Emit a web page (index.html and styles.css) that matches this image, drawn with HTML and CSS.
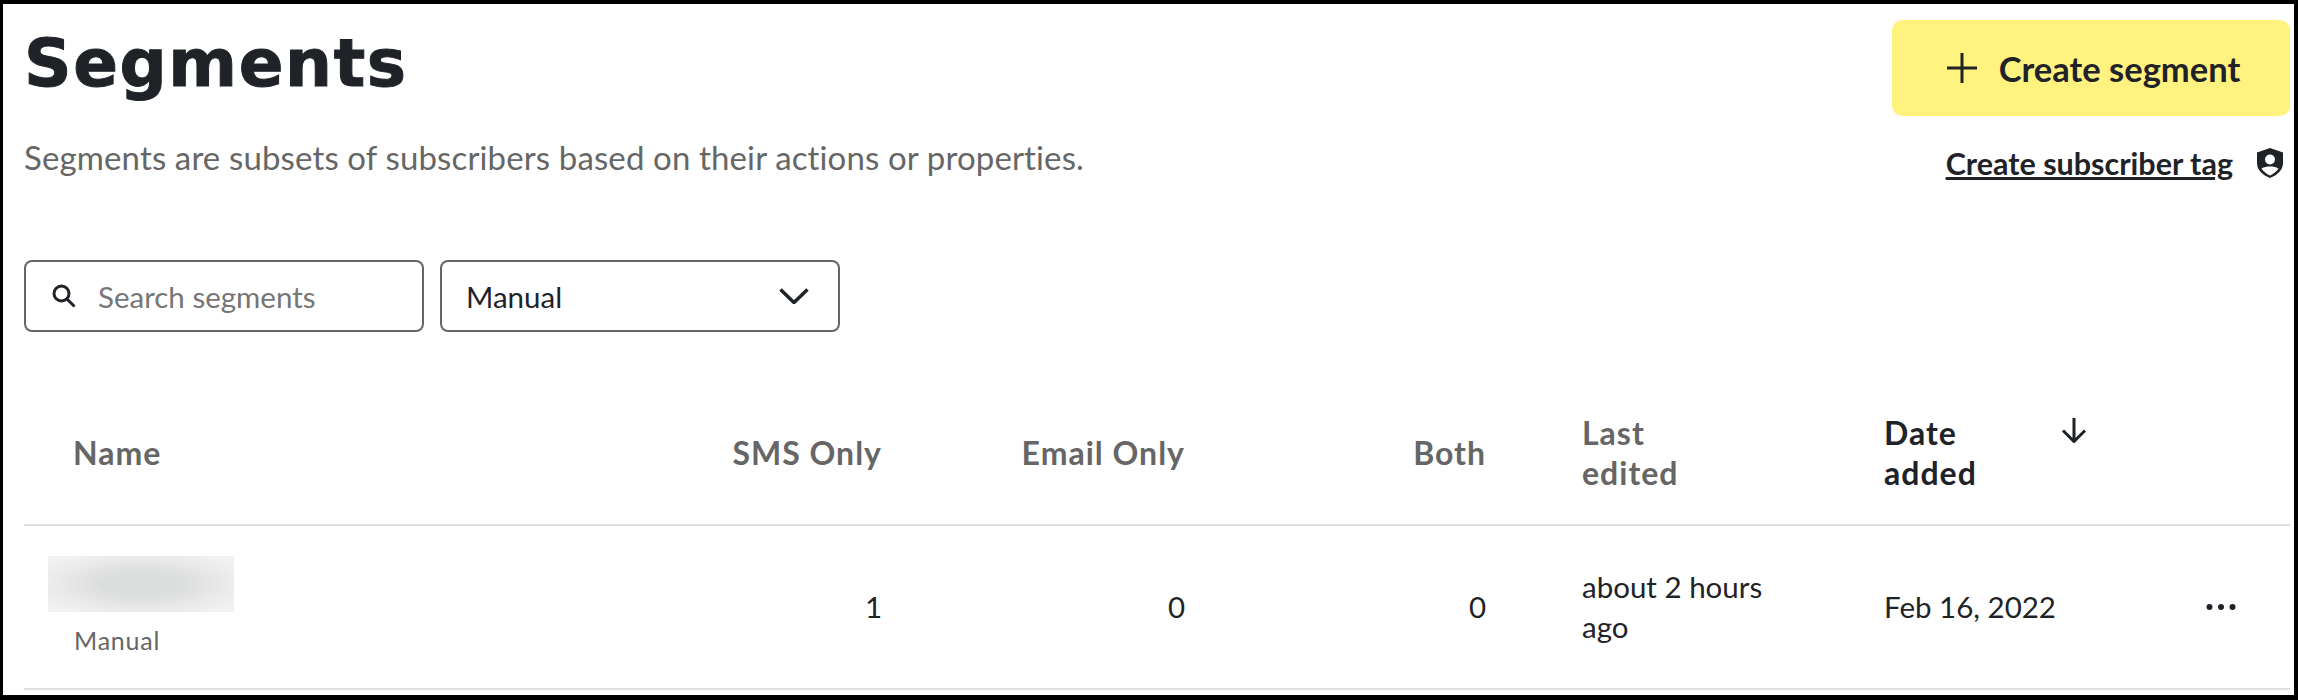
FILE: index.html
```html
<!DOCTYPE html>
<html>
<head>
  <title>Segments</title>
  <link rel="stylesheet" href="styles.css">
</head>
<body>
  <div class="page">
    <div class="page-header">
      <div class="page-heading">
        <h1 class="page-title">Segments</h1>
        <p class="page-subtitle">Segments are subsets of subscribers based on their actions or properties.</p>
      </div>
      <div class="page-actions">
        <button class="create-button">
          <svg class="plus-icon" viewBox="0 0 30 30"><path d="M15 0v30M0 15h30"/></svg>
          Create segment
        </button>
        <div class="tag-row">
          <a class="tag-link" href="#">Create subscriber tag</a>
          <svg class="shield-icon" viewBox="0 0 26 30">
            <path fill-rule="evenodd" d="M13 0l13 4.500v10.500c0 7-5.500 12-13 15C5.500 27 0 22 0 15V4.500zM13 6.500a5 5 0 1 0 0 10a5 5 0 0 0 0-10zM4.500 20.500c2 3 5 5.500 8.500 7c3.500-1.500 6.500-4 8.500-7c-2.500-1.500-5.500-2-8.500-2s-6 .5-8.500 2z"/>
          </svg>
        </div>
      </div>
    </div>

    <div class="filters">
      <div class="filter-box">
        <svg class="search-icon" viewBox="0 0 24 24"><circle cx="9.500" cy="9.500" r="7.500"/><path d="M15 15l7.500 7.500"/></svg>
        <span class="search-placeholder">Search segments</span>
      </div>
      <div class="filter-box filter-select">
        <span>Manual</span>
        <svg class="chevron-icon" viewBox="0 0 30 16"><path d="M1.500 1.500L15 14.500L28.500 1.500"/></svg>
      </div>
    </div>

    <table class="segments-table">
      <colgroup>
        <col class="col-name">
        <col class="col-sms">
        <col class="col-email">
        <col class="col-both">
        <col class="col-edited">
        <col class="col-added">
        <col class="col-menu">
      </colgroup>
      <thead>
        <tr>
          <th class="name-head">Name</th>
          <th class="num">SMS Only</th>
          <th class="num">Email Only</th>
          <th class="num">Both</th>
          <th class="edited">Last<br>edited</th>
          <th class="sorted">
            <div class="sort-head">
              <span>Date<br>added</span>
              <svg class="arrow-icon" viewBox="0 0 28 26"><path d="M14 1v23M3 13.500L14 24.500L25 13.500"/></svg>
            </div>
          </th>
          <th></th>
        </tr>
      </thead>
      <tbody>
        <tr>
          <td class="name-cell">
            <div class="blurred-name"></div>
            <div class="segment-type">Manual</div>
          </td>
          <td class="num">1</td>
          <td class="num">0</td>
          <td class="num">0</td>
          <td class="edited">about 2 hours<br>ago</td>
          <td>Feb 16, 2022</td>
          <td class="menu-cell">
            <svg class="dots-icon" viewBox="0 0 30 6"><circle cx="3.500" cy="3" r="3"/><circle cx="15" cy="3" r="3"/><circle cx="26.500" cy="3" r="3"/></svg>
          </td>
        </tr>
      </tbody>
    </table>
  </div>
</body>
</html>
```
FILE: styles.css
```css
html, body {
  margin: 0;
  padding: 0;
  height: 700px;
  background-color: #000;
  overflow: hidden;
}

body {
  font-family: Lato, "Open Sans", sans-serif;
  color: #1f2328;
}

.page {
  margin: 4px 4px 0 3px;
  height: 691px;
  padding: 0 4px 0 21px;
  background-color: #fff;
  overflow: hidden;
}

.page-header {
  display: flex;
  justify-content: space-between;
  align-items: flex-start;
  height: 256px;
}

.page-title {
  margin: 20px 0 0;
  font-family: "DejaVu Sans", sans-serif;
  font-size: 66px;
  line-height: 80px;
  font-weight: 700;
  letter-spacing: 1.600px;
  -webkit-text-stroke: 1px #1f2328;
}

.page-subtitle {
  margin: 33px 0 0;
  font-size: 33px;
  line-height: 40px;
  letter-spacing: 0.130px;
  color: #666;
}

.page-actions {
  display: flex;
  flex-direction: column;
  align-items: flex-end;
  margin-top: 16px;
}

.create-button {
  display: flex;
  align-items: center;
  justify-content: center;
  gap: 22px;
  width: 398px;
  height: 96px;
  padding: 0 0 0 5px;
  border: none;
  border-radius: 10px;
  background-color: #fff27f;
  color: #1f2328;
  font-family: inherit;
  font-size: 34.500px;
  font-weight: 700;
}

.plus-icon {
  width: 30px;
  height: 30px;
  fill: none;
  stroke: #1f2328;
  stroke-width: 3;
}

.tag-row {
  display: flex;
  align-items: center;
  gap: 24px;
  margin-top: 29px;
  padding-right: 7px;
}

.tag-link {
  font-size: 30.500px;
  line-height: 36px;
  font-weight: 700;
  color: #1f2328;
}

.shield-icon {
  width: 26px;
  height: 30px;
  fill: #1f2328;
}

.filters {
  display: flex;
  gap: 16px;
}

.filter-box {
  display: flex;
  align-items: center;
  box-sizing: border-box;
  width: 400px;
  height: 72px;
  padding: 0 26px;
  border: 2px solid #666;
  border-radius: 8px;
  font-size: 29.500px;
}

.filter-select {
  justify-content: space-between;
  padding: 0 29px 0 24px;
}

.search-icon {
  width: 24px;
  height: 24px;
  margin-right: 22px;
  fill: none;
  stroke: #1f2328;
  stroke-width: 3;
}

.search-placeholder {
  color: #767676;
}

.chevron-icon {
  width: 30px;
  height: 16px;
  fill: none;
  stroke: #1f2328;
  stroke-width: 3.500;
}

.segments-table {
  width: 2266px;
  border-collapse: collapse;
  table-layout: fixed;
}

.col-name { width: 678px; }
.col-sms { width: 180px; }
.col-email { width: 303px; }
.col-both { width: 301px; }
.col-edited { width: 398px; }
.col-added { width: 265px; }
.col-menu { width: 141px; }

th, td {
  padding: 0;
  border-bottom: 2px solid #e0e0e0;
  text-align: left;
  font-size: 29.500px;
  line-height: 40px;
}

th {
  height: 142px;
  padding-top: 50px;
  font-size: 32px;
  font-weight: 700;
  letter-spacing: 1px;
  color: #666;
}

td {
  height: 162px;
}

.num {
  text-align: right;
}

.edited {
  padding-left: 96px;
}

.name-head {
  padding-left: 49px;
}

.sorted {
  color: #1f2328;
}

.sort-head {
  display: flex;
  align-items: flex-start;
  justify-content: space-between;
  width: 204px;
}

.arrow-icon {
  width: 28px;
  height: 26px;
  margin-top: 4px;
  fill: none;
  stroke: #1f2328;
  stroke-width: 3;
}

.name-cell {
  padding-left: 24px;
}

.blurred-name {
  width: 186px;
  height: 56px;
  background: radial-gradient(ellipse at center, #dcdedd 30%, #f1f1f1 85%);
}

.segment-type {
  margin: 10px 0 0 26px;
  font-size: 25px;
  line-height: 36px;
  letter-spacing: 0.800px;
  color: #666;
}

.menu-cell {
  padding-left: 57px;
}

.dots-icon {
  display: block;
  width: 30px;
  height: 6px;
  fill: #1f2328;
}
```
